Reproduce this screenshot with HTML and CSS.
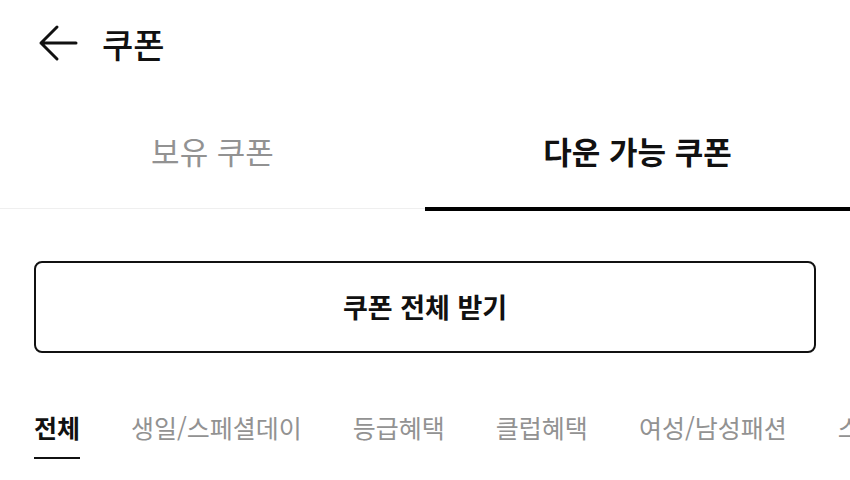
FILE: index.html
```html
<!DOCTYPE html>
<html lang="ko">
<head>
<meta charset="utf-8">
<link rel="stylesheet" href="styles.css">
</head>
<body>
<div class="page">
  <header class="header">
    <svg class="back" width="40" height="40" viewBox="0 0 40 40">
      <path d="M3 19 H38 M19 3 L3 19 L19 35" fill="none" stroke="#111" stroke-width="3" stroke-linecap="round" stroke-linejoin="round"/>
    </svg>
    <h1 class="title">쿠폰</h1>
  </header>
  <nav class="tabs">
    <div class="tab">보유 쿠폰</div>
    <div class="tab active">다운 가능 쿠폰</div>
  </nav>
  <div class="content">
    <button class="get-all">쿠폰 전체 받기</button>
    <div class="cats">
      <span class="cat active">전체</span>
      <span class="cat">생일/스페셜데이</span>
      <span class="cat">등급혜택</span>
      <span class="cat">클럽혜택</span>
      <span class="cat">여성/남성패션</span>
      <span class="cat">스포츠/레저</span>
    </div>
  </div>
</div>
</body>
</html>
```

FILE: styles.css
```css
html, body {
  margin: 0;
  padding: 0;
  background: #fff;
  overflow: hidden;
}
body {
  font-family: "Noto Sans CJK KR", "Noto Sans", sans-serif;
  color: #111;
}
.page {
  width: 850px;
  height: 480px;
  overflow: hidden;
}
.header {
  height: 88px;
  display: flex;
  align-items: center;
  padding-left: 38px;
  gap: 24px;
  box-sizing: border-box;
}
.back {
  display: block;
}
.title {
  margin: 0;
  font-size: 34px;
  font-weight: 500;
  line-height: 1;
  margin-top: -1px;
}
.tabs {
  display: flex;
  height: 120px;
  border-bottom: 1px solid #efefef;
}
.tab {
  flex: 1;
  display: flex;
  align-items: center;
  justify-content: center;
  font-size: 31px;
  color: #929292;
  position: relative;
  padding-top: 5px;
}
.tab.active {
  color: #111;
  font-weight: 700;
}
.tab.active::after {
  content: "";
  position: absolute;
  left: 0;
  right: 0;
  bottom: -3px;
  height: 4px;
  background: #000;
}
.content {
  padding: 52px 34px 0 34px;
}
.get-all {
  display: block;
  width: 782px;
  height: 92px;
  border: 2px solid #111;
  border-radius: 8px;
  background: #fff;
  font-family: inherit;
  font-size: 27px;
  font-weight: 700;
  color: #111;
  padding: 0 0 2px 0;
  cursor: pointer;
}
.cats {
  display: flex;
  gap: 51px;
  margin-top: 56px;
  white-space: nowrap;
}
.cat {
  font-size: 25px;
  color: #929292;
  line-height: 36px;
  padding-bottom: 12px;
  flex: none;
}
.cat.active {
  color: #111;
  font-weight: 700;
  border-bottom: 2px solid #111;
}
```
